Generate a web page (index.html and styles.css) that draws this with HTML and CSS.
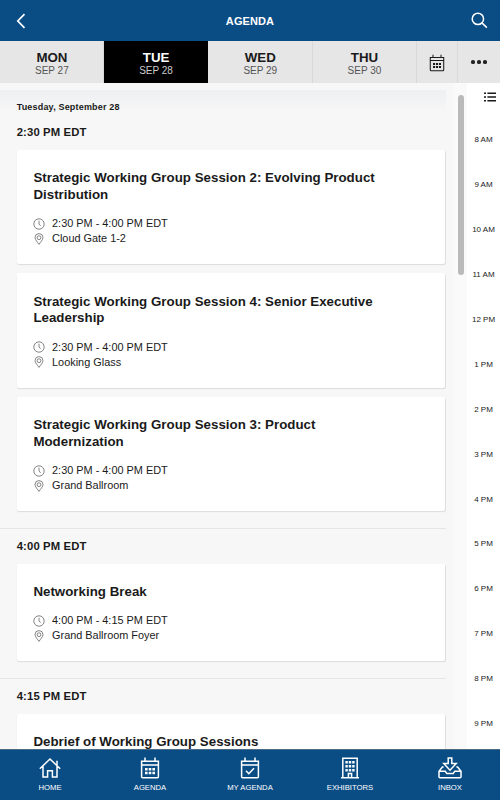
FILE: index.html
```html
<!DOCTYPE html>
<html lang="en">
<head>
  <meta charset="UTF-8" />
  <meta name="viewport" content="width=device-width, initial-scale=1.0" />
  <title>Agenda</title>
  <link rel="stylesheet" href="styles.css">
</head>
<body>
  <!-- Shared icons -->
  <svg class="sprite" aria-hidden="true">
    <symbol id="clock" viewBox="0 0 12 12"><circle cx="6" cy="6" r="5.2"/><path d="M6 2.7V6l1.6 1.8"/></symbol>
    <symbol id="pin" viewBox="0 0 12 12"><path d="M6 11.4C4.7 9.2 2 6.9 2 4.6a4 4 0 0 1 8 0C10 6.9 7.3 9.2 6 11.4z"/><circle cx="6" cy="4.7" r="1.9"/></symbol>
    <symbol id="calendar" viewBox="0 0 20 22"><path d="M1.6 4.2h16.8v15.6a1 1 0 0 1-1 1H2.6a1 1 0 0 1-1-1zM1.6 8h16.8M5 .6v3.6M15 .6v3.6"/><path class="dots" d="M5 11h2.6v2.4H5zM8.7 11h2.6v2.4H8.7zM12.4 11H15v2.4h-2.6zM5 14.8h2.6v2.4H5zM8.7 14.8h2.6v2.4H8.7zM12.4 14.8H15v2.4h-2.6z"/></symbol>
  </svg>

  <div class="app">
    <header class="topbar">
      <svg class="back" viewBox="0 0 10 16"><path d="M8.5 1.2L1.8 8l6.7 6.8"/></svg>
      <h1>AGENDA</h1>
      <svg class="search" viewBox="0 0 18 18"><circle cx="7.3" cy="7.3" r="6"/><path d="M11.8 11.8l5 4.7"/></svg>
    </header>

    <nav class="days">
      <a class="day"><b>MON</b><span>SEP 27</span></a>
      <a class="day active"><b>TUE</b><span>SEP 28</span></a>
      <a class="day"><b>WED</b><span>SEP 29</span></a>
      <a class="day"><b>THU</b><span>SEP 30</span></a>
      <a class="tool"><svg class="tool-cal"><use href="#calendar"/></svg></a>
      <a class="tool more"><i></i><i></i><i></i></a>
    </nav>

    <main class="content">
      <div class="list">
        <div class="date">Tuesday, September 28</div>

        <section class="slot">
          <h2>2:30 PM EDT</h2>
          <article class="card">
            <h3>Strategic Working Group Session 2: Evolving Product Distribution</h3>
            <p><svg><use href="#clock"/></svg>2:30 PM - 4:00 PM EDT</p>
            <p><svg><use href="#pin"/></svg>Cloud Gate 1-2</p>
          </article>
          <article class="card">
            <h3>Strategic Working Group Session 4: Senior Executive Leadership</h3>
            <p><svg><use href="#clock"/></svg>2:30 PM - 4:00 PM EDT</p>
            <p><svg><use href="#pin"/></svg>Looking Glass</p>
          </article>
          <article class="card">
            <h3>Strategic Working Group Session 3: Product Modernization</h3>
            <p><svg><use href="#clock"/></svg>2:30 PM - 4:00 PM EDT</p>
            <p><svg><use href="#pin"/></svg>Grand Ballroom</p>
          </article>
        </section>

        <section class="slot">
          <h2>4:00 PM EDT</h2>
          <article class="card">
            <h3>Networking Break</h3>
            <p><svg><use href="#clock"/></svg>4:00 PM - 4:15 PM EDT</p>
            <p><svg><use href="#pin"/></svg>Grand Ballroom Foyer</p>
          </article>
        </section>

        <section class="slot">
          <h2>4:15 PM EDT</h2>
          <article class="card">
            <h3>Debrief of Working Group Sessions</h3>
          </article>
        </section>
      </div>

      <div class="scroll"><div class="thumb"></div></div>

      <aside class="hours">
        <svg class="list-icon" viewBox="0 0 12 10"><path d="M0 1.2h2M3.4 1.2H12M0 5h2M3.4 5H12M0 8.8h2M3.4 8.8H12"/></svg>
        <span>8 AM</span>
        <span>9 AM</span>
        <span>10 AM</span>
        <span>11 AM</span>
        <span>12 PM</span>
        <span>1 PM</span>
        <span>2 PM</span>
        <span>3 PM</span>
        <span>4 PM</span>
        <span>5 PM</span>
        <span>6 PM</span>
        <span>7 PM</span>
        <span>8 PM</span>
        <span>9 PM</span>
      </aside>
    </main>

    <footer class="tabs">
      <a>
        <svg viewBox="0 0 22 22"><path d="M.8 11.8L11 2l10.2 9.8M4 9.2V20h4.6v-6.2h4.8V20H18V9.2M18 8V3.8"/></svg>
        HOME
      </a>
      <a>
        <svg class="tab-cal"><use href="#calendar"/></svg>
        AGENDA
      </a>
      <a>
        <svg class="tab-cal" viewBox="0 0 20 22"><path d="M1.6 4.2h16.8v15.6a1 1 0 0 1-1 1H2.6a1 1 0 0 1-1-1zM1.6 8h16.8M5 .6v3.6M15 .6v3.6M6 13.8l2.8 2.9 5.2-5.4"/></svg>
        MY AGENDA
      </a>
      <a>
        <svg viewBox="0 0 22 22"><path d="M3.8 20.8V1.2h14.4v19.6M2 20.8h18M9.4 20.8v-4.4h3.2v4.4"/><path class="dots" d="M6.4 4h2.4v2.4H6.4zM9.8 4h2.4v2.4H9.8zM13.2 4h2.4v2.4h-2.4zM6.4 8h2.4v2.4H6.4zM9.8 8h2.4v2.4H9.8zM13.2 8h2.4v2.4h-2.4zM6.4 12h2.4v2.4H6.4zM9.8 12h2.4v2.4H9.8zM13.2 12h2.4v2.4h-2.4z"/></svg>
        EXHIBITORS
      </a>
      <a>
        <svg class="inbox" viewBox="0 0 24 22"><path d="M10.2 1h3.6v5.6h4.4L12 13.2 5.8 6.6h4.4zM5.6 10H4.4L1 14.3v5.4a1 1 0 0 0 1 1h20a1 1 0 0 0 1-1v-5.4L19.6 10h-1.2M1 14.3h6.3l1.5 2.3h6.4l1.5-2.3H23"/></svg>
        INBOX
      </a>
    </footer>
  </div>
</body>
</html>
```

FILE: styles.css
```css
* {
  box-sizing: border-box;
}
body {
  margin: 0;
  font-family: "Liberation Sans", Arial, sans-serif;
  color: #1a1a1a;
  background: #f7f7f7;
}
h1, h2, h3, p {
  margin: 0;
}
svg {
  fill: none;
  stroke: currentColor;
  flex: none;
}
.sprite {
  display: none;
}
.dots {
  fill: currentColor;
  stroke: none;
}
.app {
  display: flex;
  flex-direction: column;
  height: 800px;
  overflow: hidden;
}

/* Top bar */
.topbar {
  display: flex;
  align-items: center;
  justify-content: space-between;
  height: 41px;
  padding: 0 12px 0 16px;
  background: #0a4d85;
  color: #fff;
}
.topbar h1 {
  margin-right: 4px;
  font-size: 11px;
  letter-spacing: 0.1px;
}
.back {
  width: 10px;
  height: 16px;
  margin-right: 7px;
  stroke-width: 1.7;
}
.search {
  width: 17px;
  height: 17px;
  stroke-width: 1.6;
}

/* Day picker */
.days {
  display: flex;
  height: 42px;
  background: #e6e6e6;
}
.day {
  display: flex;
  flex-direction: column;
  align-items: center;
  width: 104.2px;
  padding: 9px 0 0 0.6px;
  border-right: 1px solid #d9d9d9;
}
.day b {
  font-size: 13.3px;
  line-height: 15px;
}
.day span {
  font-size: 10px;
  line-height: 12px;
  color: #555;
}
.day.active {
  background: #000;
  border-color: #000;
  color: #fff;
}
.day.active span {
  color: #ccc;
}
.tool {
  display: flex;
  align-items: center;
  justify-content: center;
  width: 41.6px;
  border-right: 1px solid #d9d9d9;
}
.tool-cal {
  width: 16px;
  height: 18px;
  margin-top: 2px;
  stroke-width: 1.3;
}
.more {
  gap: 2.4px;
  border: 0;
}
.more i {
  width: 3.7px;
  height: 3.7px;
  border-radius: 50%;
  background: #222;
}

/* Agenda */
.content {
  display: flex;
  flex: 1;
  min-height: 0;
  overflow: hidden;
}
.list {
  width: 446px;
  padding-top: 7px;
}
.date {
  height: 34px;
  padding: 12px 16.7px 0;
  font-size: 9px;
  font-weight: bold;
  line-height: 10px;
  letter-spacing: 0.18px;
  background: linear-gradient(#eeeff1, #f7f7f7 22px);
}
.slot {
  padding: 0 1px 16.8px 16.7px;
}
.slot + .slot {
  border-top: 1px solid #e5e5e5;
  padding-top: 9px;
}
.slot h2 {
  height: 25.7px;
  font-size: 11.3px;
  line-height: 16px;
  letter-spacing: 0.12px;
}
.card {
  padding: 20.5px 16.7px 18px;
  margin-bottom: 9px;
  background: #fff;
  border-radius: 2px;
  box-shadow: 0.5px 1px 1px #dcdcdc;
}
.card:last-child {
  margin-bottom: 0;
}
.card h3 {
  margin-bottom: 12.6px;
  width: 350px;
  font-size: 13.3px;
  line-height: 16.7px;
  letter-spacing: 0.02px;
}
.card p {
  display: flex;
  align-items: center;
  gap: 6.7px;
  font-size: 10.9px;
  line-height: 15px;
}
.card p svg {
  width: 12px;
  height: 12px;
  color: #666;
  stroke-width: 0.8;
}
.scroll {
  width: 21px;
  padding: 12px 0 0 11.5px;
  background: linear-gradient(90deg, #f7f7f7 8px, #fafafa 8px);
}
.thumb {
  width: 6px;
  height: 180px;
  border-radius: 3px;
  background: #bababa;
}

/* Hour rail */
.hours {
  display: flex;
  flex-direction: column;
  align-items: center;
  flex: 1;
  background: #fff;
}
.hours span {
  flex: none;
  height: 44.95px;
  font-size: 8px;
  line-height: 10px;
  white-space: nowrap;
}
.list-icon {
  width: 12px;
  height: 10px;
  margin: 9px 0 33px 12px;
  stroke-width: 1.5;
}

/* Bottom tabs */
.tabs {
  display: flex;
  height: 51px;
  background: #0a4d85;
  border-top: 1px solid #4b6a85;
  color: #fff;
}
.tabs a {
  display: flex;
  flex-direction: column;
  align-items: center;
  gap: 4px;
  width: 100px;
  padding-top: 7px;
  font-size: 7.7px;
  line-height: 10px;
}
.tabs svg {
  width: 22px;
  height: 22px;
  stroke-width: 1.5;
}
.tabs .tab-cal {
  width: 20px;
}
.tabs .inbox {
  width: 24px;
}
```
